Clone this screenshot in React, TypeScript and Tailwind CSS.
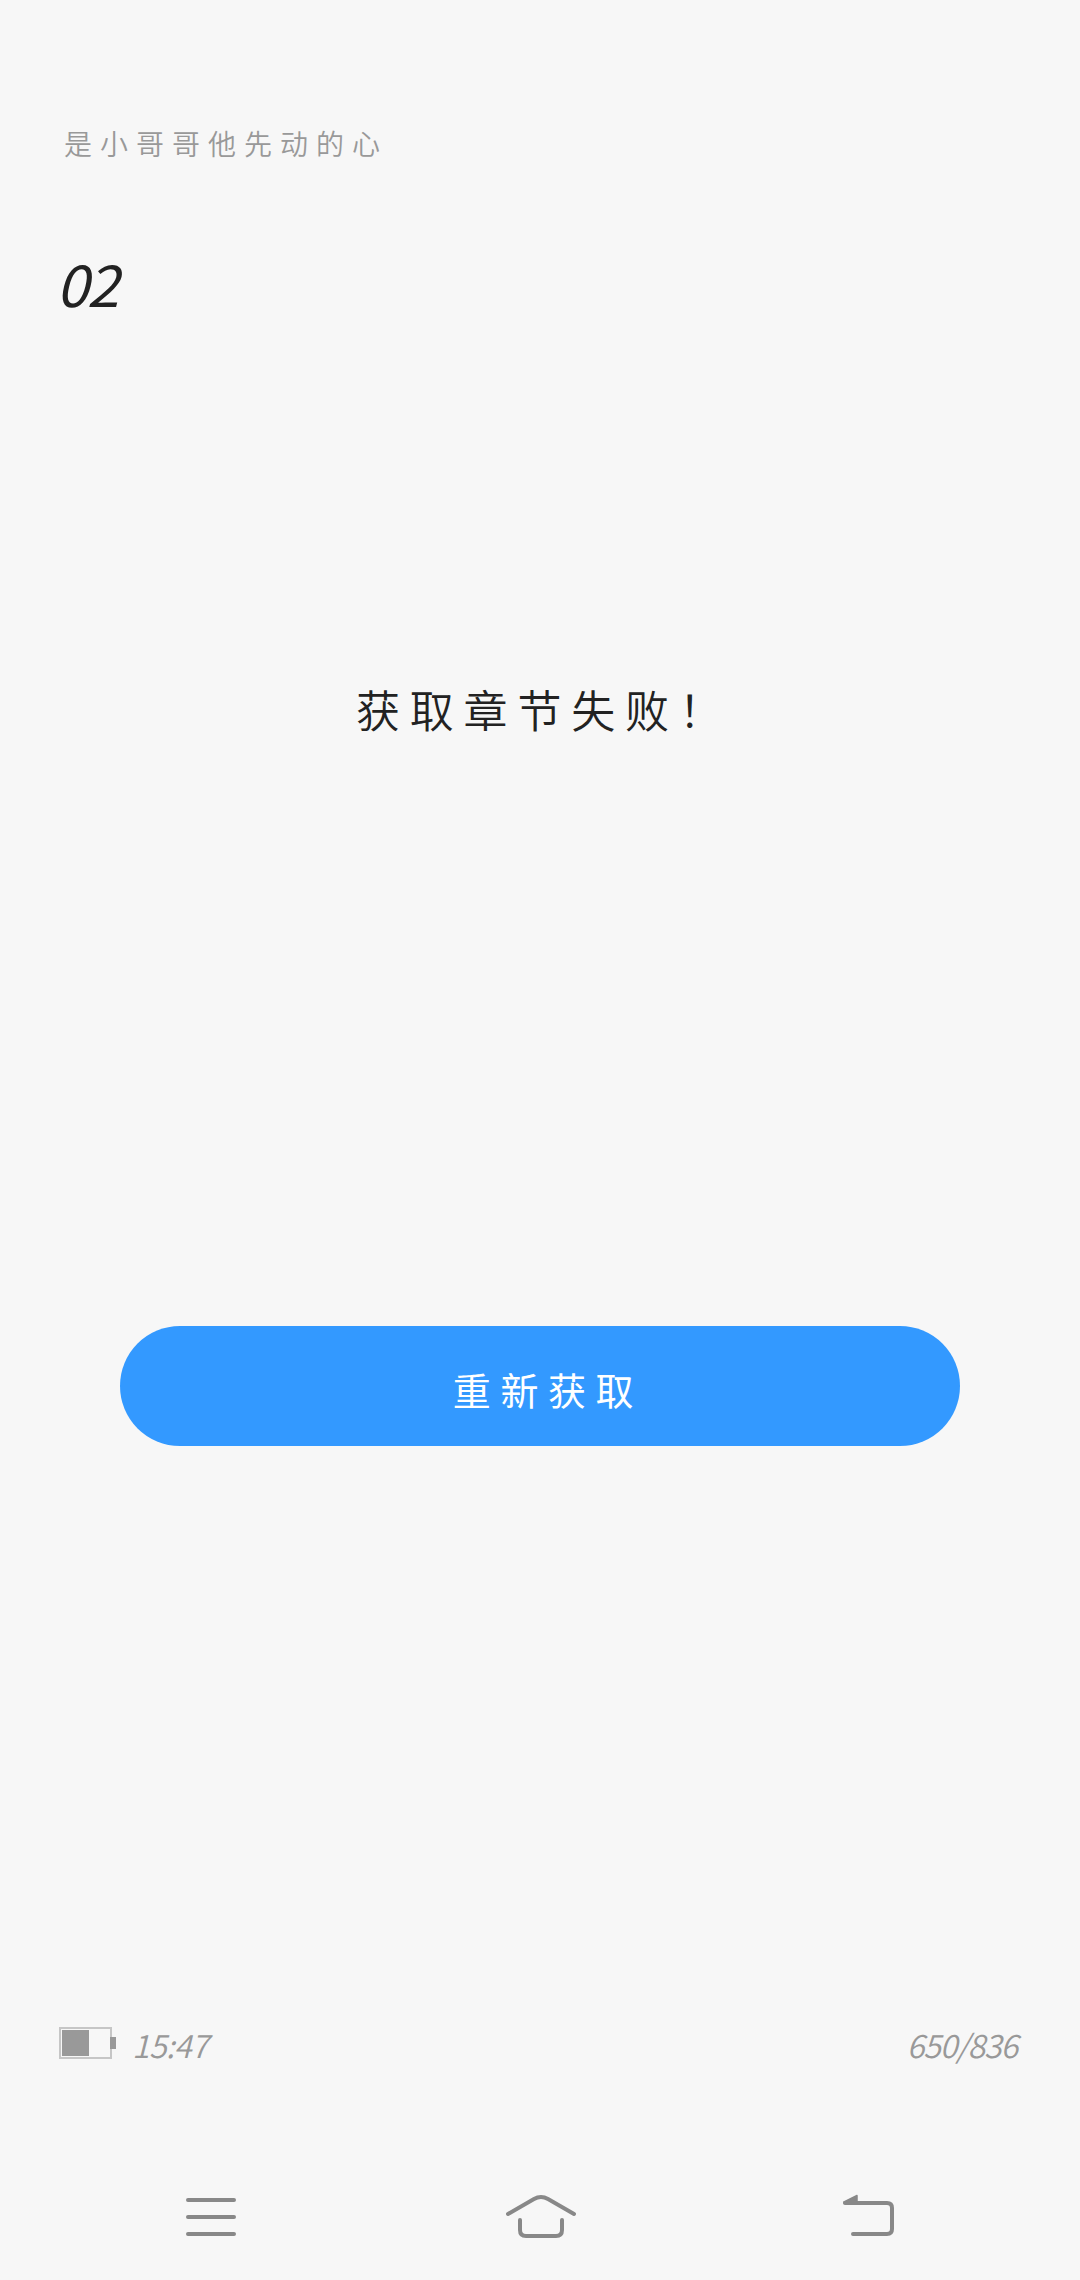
import React from "react";

function Battery() {
  return (
    <div className="flex items-center">
      <div className="h-8 w-[53px] border-2 border-[#c6c6c6] p-px">
        <div className="h-full w-[27px] bg-[#999999]" />
      </div>
      <div className="-ml-0.5 h-3 w-1.5 bg-[#999999]" />
    </div>
  );
}

function StatusLine() {
  return (
    <div className="mt-[577px] flex h-10 items-center justify-between pl-[59px] pr-[63px] text-[32px] font-[350] italic leading-10 text-[#999999]">
      <div className="flex items-center">
        <Battery />
        <span className="ml-4 mt-0.5 tracking-[-0.6px]">15:47</span>
      </div>
      <span className="mt-0.5 tracking-[-1.1px]">650/836</span>
    </div>
  );
}

function NavBar() {
  return (
    <nav className="mt-[117px] flex h-[70px] items-start justify-between pl-[170px] pr-[170px]">
      <svg className="h-[70px] w-[90px]" viewBox="0 0 90 70" fill="none" stroke="#888888" strokeWidth="4" strokeLinecap="round">
        <path d="M18 20H64M18 37H64M18 54H64" />
      </svg>
      <svg className="ml-[-10px] h-[70px] w-[100px]" viewBox="0 0 100 70" fill="none" stroke="#888888" strokeWidth="4" strokeLinecap="round" strokeLinejoin="round">
        <path d="M18 34L44 19Q51 15 58 19L84 34" />
        <path d="M30 40V50Q30 56 36 56H66Q72 56 72 50V40" />
      </svg>
      <svg className="h-[70px] w-[80px]" viewBox="0 0 80 70" fill="none" stroke="#888888" strokeWidth="4" strokeLinecap="round">
        <path d="M15 23H57Q62 23 62 28V49Q62 54 57 54H23" />
        <path d="M14 22L27 15.5V23H14Z" fill="#888888" stroke="#888888" strokeWidth="1.5" strokeLinejoin="round" />
      </svg>
    </nav>
  );
}

export default function App() {
  return (
    <main className="flex h-[2280px] w-[1080px] flex-col overflow-hidden bg-[#f7f7f7] font-['Noto_Sans_CJK_SC',sans-serif] text-[#222222]">
      <header className="mt-[123px] h-10 pl-16 text-[28px] font-[350] leading-10 tracking-[8px] text-[#999999]">
        是小哥哥他先动的心
      </header>
      <h1 className="mt-[87px] h-16 pl-[56px] text-[58px] font-normal italic leading-[64px] tracking-[-1.5px]">02</h1>
      <p className="mt-[365px] h-[60px] pl-[356px] text-[44px] font-[350] leading-[60px] tracking-[9.8px]">
        获取章节失败！
      </p>
      <button className="mx-[120px] mt-[587px] flex h-[120px] items-center justify-center rounded-full bg-[#3399ff] pl-[16px] pt-1 text-[38px] font-normal tracking-[9.6px] text-white">
        重新获取
      </button>
      <StatusLine />
      <NavBar />
    </main>
  );
}
